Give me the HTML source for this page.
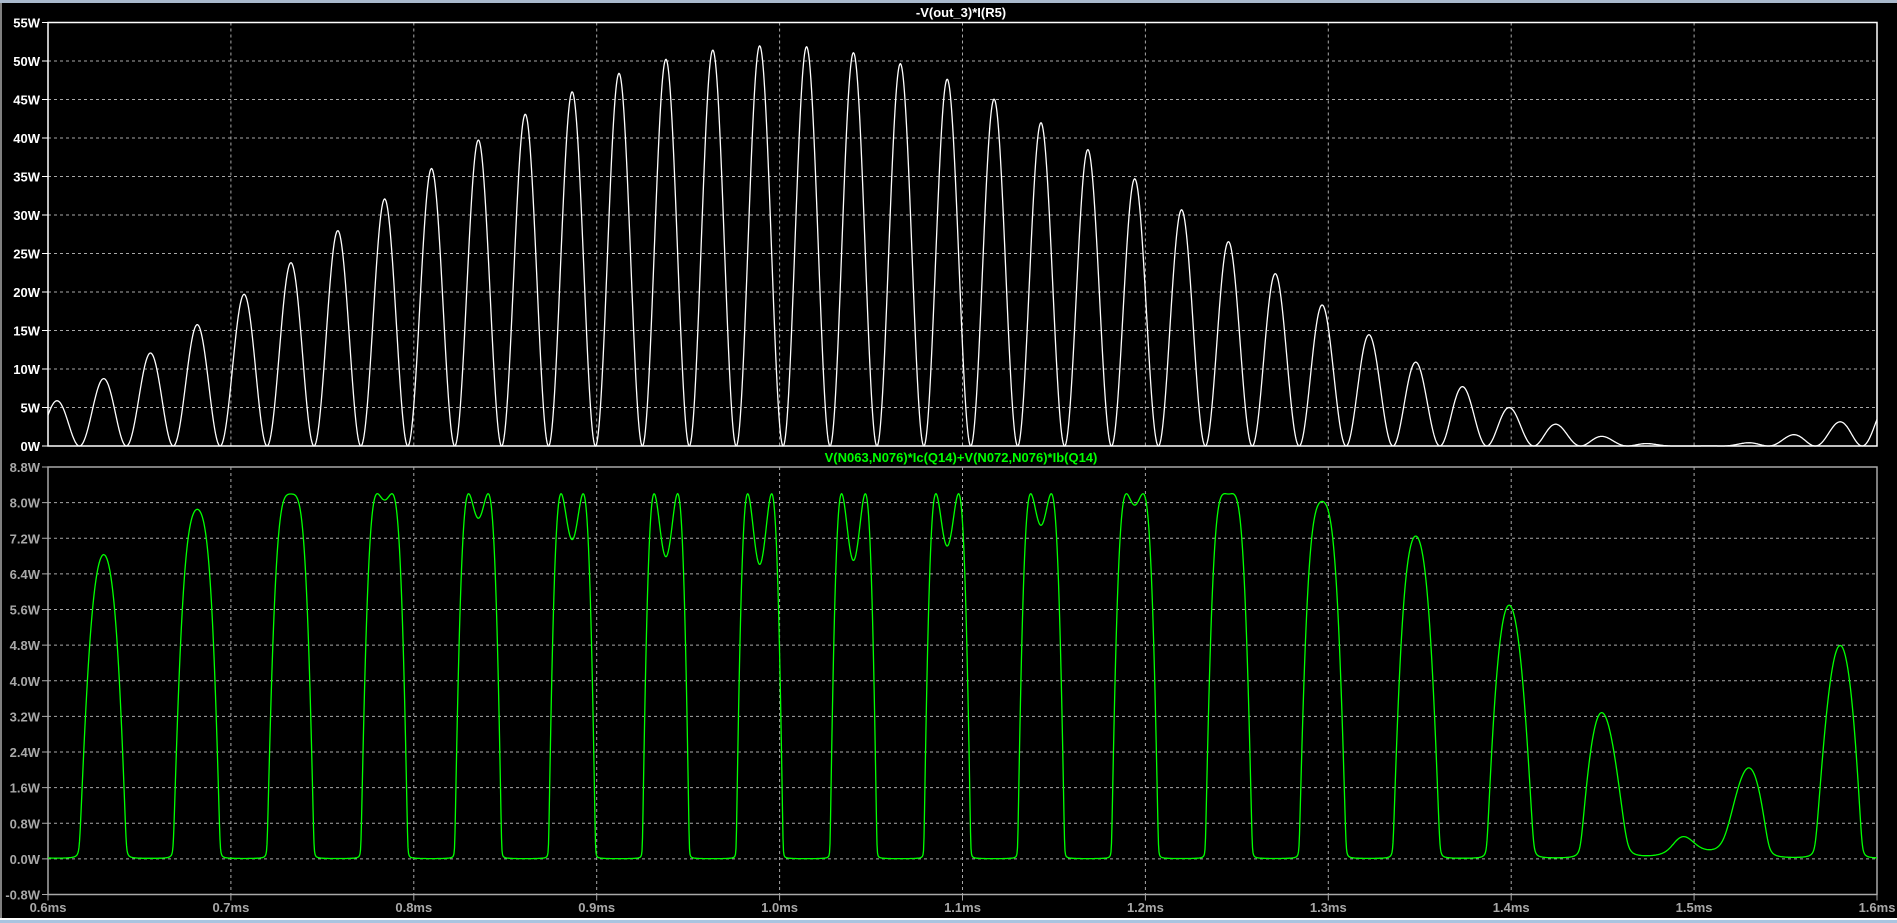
<!DOCTYPE html>
<html><head><meta charset="utf-8">
<style>
html,body{margin:0;padding:0;background:#000;}
body{width:1897px;height:923px;overflow:hidden;position:relative;}
svg{position:absolute;left:0;top:0;}
text{font-family:"Liberation Sans",sans-serif;font-weight:bold;font-size:13px;}
</style></head>
<body>
<svg id="s" width="1897" height="923" xmlns="http://www.w3.org/2000/svg">
<rect x="0" y="0" width="1897" height="923" fill="#000"/>
<rect x="0" y="0" width="1897" height="3" fill="#a9b9cc"/>
<rect x="0" y="3" width="2" height="916" fill="#808080"/>
<rect x="0" y="918" width="1897" height="2" fill="#ffffff"/>
<rect x="0" y="920" width="1897" height="3" fill="#a9c4e0"/>
<g id="grid"></g>
<text x="961" y="17" fill="#fff" text-anchor="middle">-V(out_3)*I(R5)</text>
<text x="961" y="462" fill="#00ff00" text-anchor="middle">V(N063,N076)*Ic(Q14)+V(N072,N076)*Ib(Q14)</text>
<path id="p1" fill="none" stroke="#fff" stroke-width="1.3"/>
<path id="p2" fill="none" stroke="#00ff00" stroke-width="1.3"/>
</svg>
<script>
var g=document.getElementById('grid'),ns="http://www.w3.org/2000/svg";
function el(t,a,txt){var e=document.createElementNS(ns,t);for(var k in a)e.setAttribute(k,a[k]);if(txt)e.textContent=txt;g.appendChild(e);return e;}
var L=48,R=1877,W=R-L;
var T0=22.5,T1=446;
for(var i=0;i<=11;i++){var y=T1-i*(T1-T0)/11;
 if(i>0&&i<11)el('line',{x1:L,y1:y,x2:R,y2:y,stroke:'#a8a8a8','stroke-dasharray':'3,3','stroke-width':1});
 el('line',{x1:L-6,y1:y,x2:L,y2:y,stroke:'#fff'});
 el('text',{x:L-8,y:y+5,fill:'#fff','text-anchor':'end'},(i*5)+'W');}
var B0=467,B1=894.5,st=(B1-B0)/12;
var labs=['8.8W','8.0W','7.2W','6.4W','5.6W','4.8W','4.0W','3.2W','2.4W','1.6W','0.8W','0.0W','-0.8W'];
for(var i=0;i<=12;i++){var y=B0+i*st;
 if(i>0&&i<12)el('line',{x1:L,y1:y,x2:R,y2:y,stroke:'#a8a8a8','stroke-dasharray':'3,3','stroke-width':1});
 el('line',{x1:L-6,y1:y,x2:L,y2:y,stroke:'#a8a8a8'});
 el('text',{x:L-8,y:y+5,fill:'#a8a8a8','text-anchor':'end'},labs[i]);}
for(var j=0;j<=10;j++){var x=L+j*W/10;
 if(j>0&&j<10){el('line',{x1:x,y1:T0,x2:x,y2:T1,stroke:'#a8a8a8','stroke-dasharray':'3,3'});
  el('line',{x1:x,y1:B0,x2:x,y2:B1,stroke:'#a8a8a8','stroke-dasharray':'3,3'});}
 el('line',{x1:x,y1:B1,x2:x,y2:B1+6,stroke:'#a8a8a8'});
 el('text',{x:x,y:912,fill:'#a8a8a8','text-anchor':'middle'},(0.6+j*0.1).toFixed(1)+'ms');}
el('rect',{x:L,y:T0,width:W,height:T1-T0,fill:'none',stroke:'#fff','stroke-width':1.5});
el('rect',{x:L,y:B0,width:W,height:B1-B0,fill:'none',stroke:'#a8a8a8','stroke-width':1.5});
var per=0.0513;
function A(t){return Math.sin(Math.PI*(t-0.495)/1.005);}
function sig(t){return A(t)*Math.cos(2*Math.PI*(t-0.630)/per);}
var d1='',d2='';
for(var k=0;k<=W*2;k++){var x=L+k/2,t=0.6+(k/2)/W;
 var s=sig(t);var p1=52*s*s;var y1=T1-p1/5*((T1-T0)/11);
 var v=1.44*s;var xx=0.5*(v+Math.sqrt(v*v+0.002));var p2=8.2*(1-(1-xx)*(1-xx));if(p2<0)p2=0;var y2=B0+11*st-p2/0.8*st;
 d1+=(k?'L':'M')+x.toFixed(1)+' '+y1.toFixed(1);
 d2+=(k?'L':'M')+x.toFixed(1)+' '+y2.toFixed(1);}
document.getElementById('p1').setAttribute('d',d1);
document.getElementById('p2').setAttribute('d',d2);
</script>
</body></html>
